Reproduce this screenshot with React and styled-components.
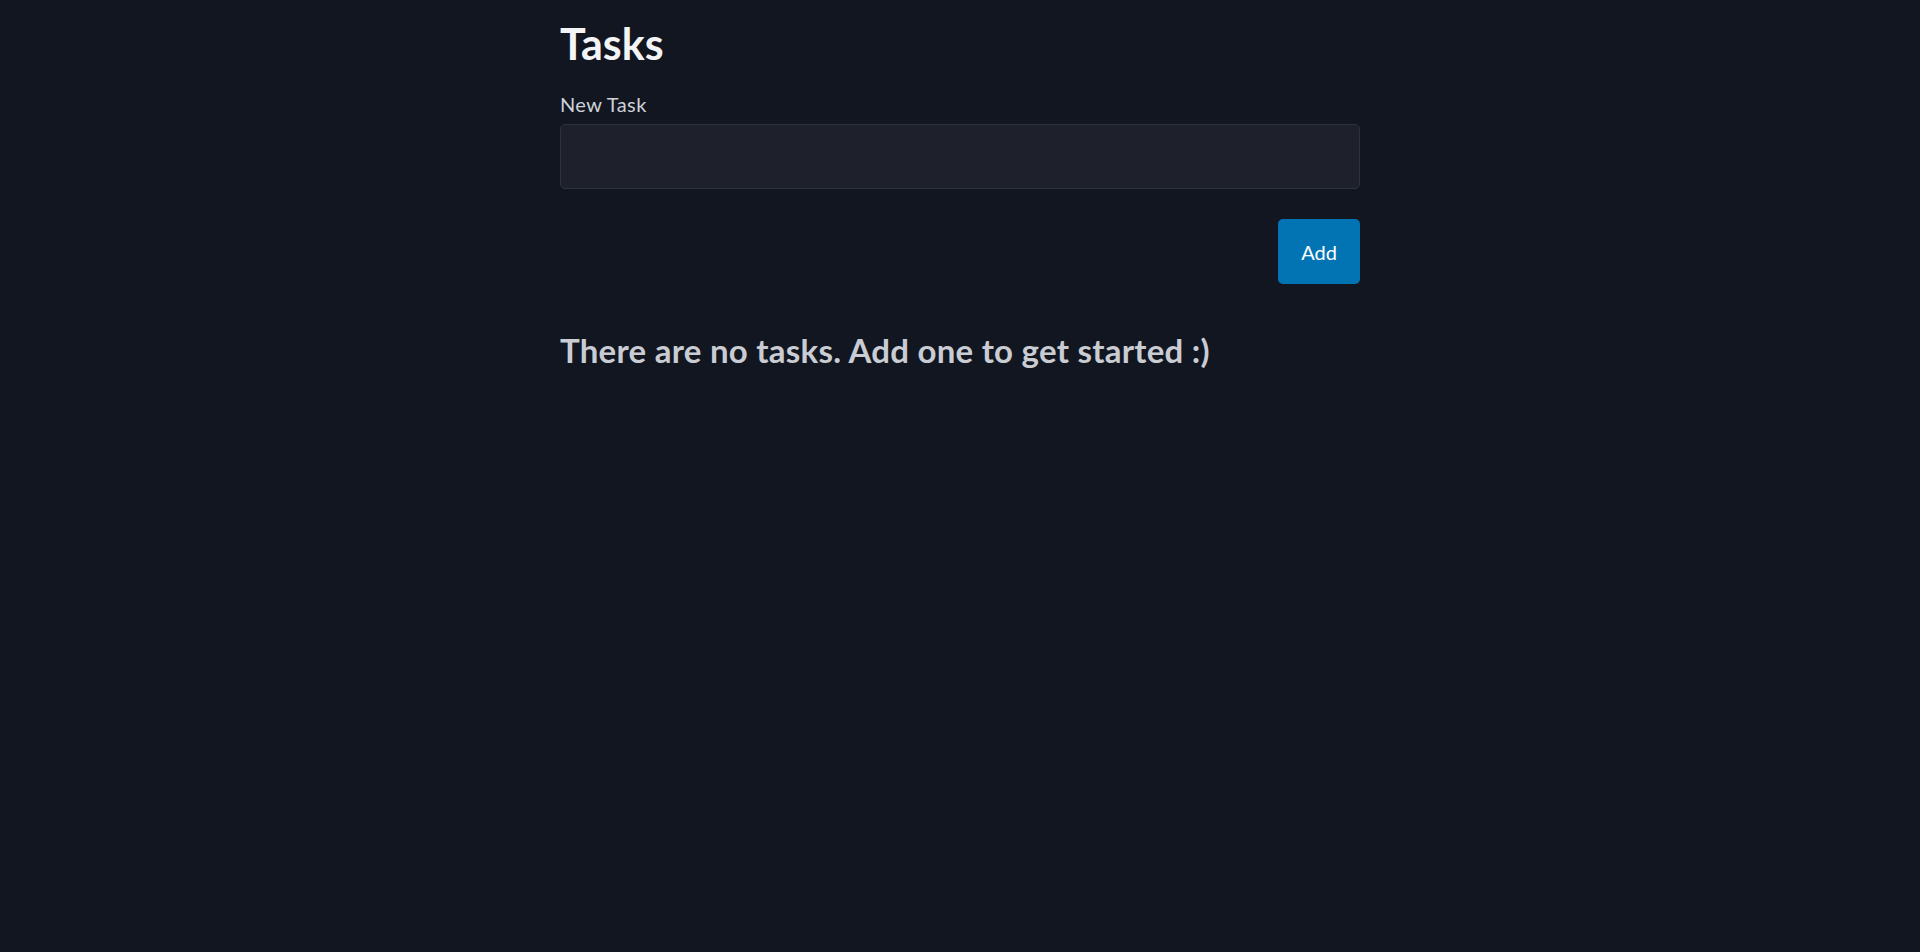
import React, { useState } from 'react';
import styled, { createGlobalStyle } from 'styled-components';

const GlobalStyle = createGlobalStyle`
  html, body {
    margin: 0;
    padding: 0;
    background: #121620;
    min-height: 100%;
  }
  body {
    font-family: Lato, "Open Sans", sans-serif;
    color: #d1d5db;
  }
  * {
    box-sizing: border-box;
  }
`;

export default function App() {
  const [task, setTask] = useState("");
  const [tasks, setTasks] = useState([]);

  const handleAdd = () => {
    if (!task.trim()) return;
    setTasks([...tasks, task.trim()]);
    setTask("");
  };

  return (
    <>
      <GlobalStyle />
      <Container>
        <Title>Tasks</Title>
        <Label htmlFor="new-task">New Task</Label>
        <TaskInput id="new-task" type="text" value={task} onChange={(e) => setTask(e.target.value)} />
        <Actions>
          <AddButton type="button" onClick={handleAdd}>Add</AddButton>
        </Actions>
        {tasks.length === 0 ? (
          <Empty>There are no tasks. Add one to get started :)</Empty>
        ) : (
          <List>
            {tasks.map((t, i) => (
              <Item key={i}>{t}</Item>
            ))}
          </List>
        )}
      </Container>
    </>
  );
}

const Container = styled.div`
  width: 800px;
  margin: 0 auto;
  padding-top: 18px;
  display: flex;
  flex-direction: column;
`;

const Title = styled.h1`
  margin: 0;
  font-size: 43px;
  line-height: 52px;
  font-weight: 700;
  color: #f3f4f6;
`;

const Label = styled.label`
  margin-top: 19px;
  font-size: 20px;
  line-height: 30px;
  letter-spacing: 0.4px;
  color: #cdd1d8;
`;

const TaskInput = styled.input`
  margin-top: 5px;
  height: 65px;
  width: 100%;
  padding: 0 16px;
  background: #1e212b;
  border: 1px solid #2e323d;
  border-radius: 5px;
  color: #f3f4f6;
  font-family: inherit;
  font-size: 20px;
  outline: none;
`;

const Actions = styled.div`
  display: flex;
  justify-content: flex-end;
  margin-top: 30px;
`;

const AddButton = styled.button`
  height: 65px;
  min-width: 82px;
  padding: 0 22px;
  border: none;
  border-radius: 5px;
  background: #0274b4;
  color: #ffffff;
  font-family: inherit;
  font-size: 20px;
  cursor: pointer;
`;

const Empty = styled.h2`
  margin: 46px 0 0;
  font-size: 33px;
  line-height: 40px;
  letter-spacing: 0.25px;
  font-weight: 700;
  color: #c9ccd3;
`;

const List = styled.ul`
  margin: 46px 0 0;
  padding: 0;
  list-style: none;
`;

const Item = styled.li`
  font-size: 20px;
  padding: 12px 0;
`;
